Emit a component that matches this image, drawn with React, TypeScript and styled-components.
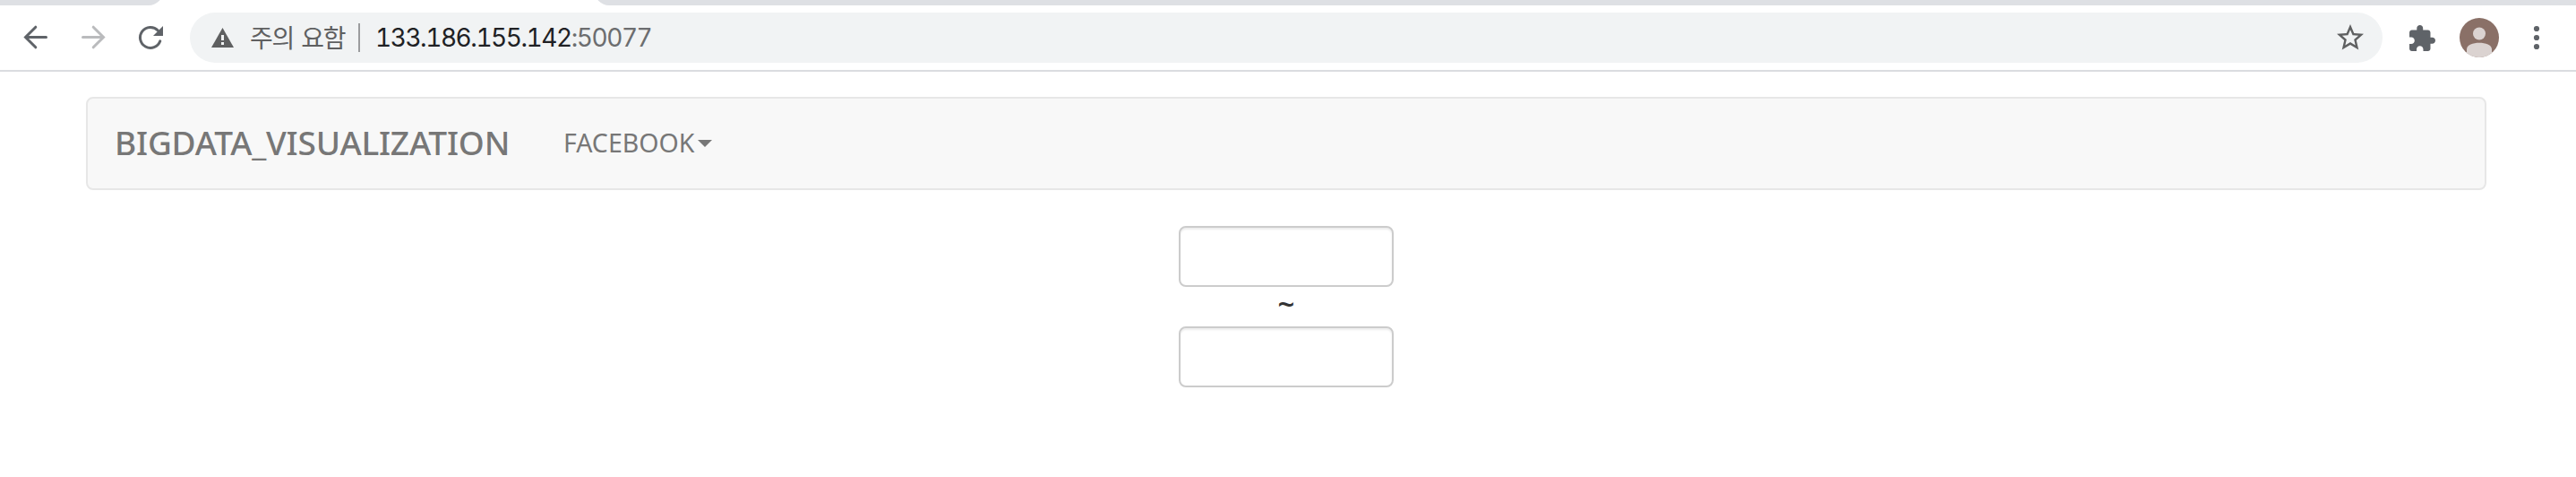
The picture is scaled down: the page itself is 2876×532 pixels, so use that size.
import React from "react";
import styled, { createGlobalStyle } from "styled-components";

const GlobalStyle = createGlobalStyle`
  *, *::before, *::after { box-sizing: border-box; }
  html, body { margin: 0; background: #fff; }
  body { height: 532px; overflow: hidden; }
`;

const Page = styled.div`
  width: 2876px;
  height: 532px;
  background: #fff;
`;

const TabStrip = styled.div`
  display: flex;
  justify-content: space-between;
  height: 6px;
  overflow: hidden;
`;

const TabEdge = styled.div<{ $side: "left" | "right" }>`
  width: ${(p) => (p.$side === "left" ? 182 : 2212)}px;
  height: 22px;
  margin-top: -16px;
  background: #dee0e4;
  border-radius: ${(p) => (p.$side === "left" ? "0 0 16px 0" : "0 0 0 16px")};
`;

const Toolbar = styled.header`
  display: flex;
  align-items: center;
  height: 74px;
  padding: 0 38px 0 24px;
  border-bottom: 2px solid #dadce0;
`;

const IconButton = styled.button<{ $size: number; $gap: number }>`
  display: flex;
  flex: none;
  width: ${(p) => p.$size}px;
  height: ${(p) => p.$size}px;
  margin: 0 ${(p) => p.$gap}px 0 0;
  padding: 0;
  border: 0;
  background: none;

  svg { display: block; width: 100%; height: 100%; }
`;

const Omnibox = styled.div`
  display: flex;
  align-items: center;
  flex: none;
  width: 2448px;
  height: 56px;
  margin-right: 30px;
  padding: 0 18px 0 24px;
  border-radius: 28px;
  background: #f1f3f4;
`;

const WarningIcon = styled.svg`
  flex: none;
  width: 25px;
  height: 22px;
`;

const SecurityLabel = styled.span`
  width: 121px;
  margin-left: 18px;
  padding-bottom: 3px;
  font: 400 28px/40px "Noto Sans CJK KR", sans-serif;
  letter-spacing: -1.2px;
  word-spacing: 3px;
  color: #5f6061;
  white-space: nowrap;
`;

const Divider = styled.span`
  width: 2px;
  height: 32px;
  background: #9b9c9e;
`;

const Address = styled.span`
  flex: 1;
  margin-left: 17px;
  font: 400 28px/40px Inter, sans-serif;
  font-variant-numeric: tabular-nums;
  letter-spacing: -1.45px;
  color: #202124;
`;

const Port = styled.span`
  color: #6c6d6f;
`;

const Container = styled.main`
  padding: 28px 100px 0 96px;
`;

const Navbar = styled.nav`
  display: flex;
  align-items: center;
  height: 104px;
  padding: 0 0 3px 30px;
  border: 2px solid #e7e7e7;
  border-radius: 8px;
  background: #f8f8f8;
  color: #777;
  font-family: "Noto Sans", sans-serif;
`;

const Brand = styled.span`
  width: 501px;
  font-size: 37px;
  font-weight: 500;
  line-height: 40px;
  letter-spacing: -0.2px;
  white-space: nowrap;
`;

const MenuToggle = styled.span`
  display: flex;
  align-items: center;
  font-size: 28.5px;
  font-weight: 450;
  line-height: 40px;
`;

const Caret = styled.span`
  margin: 3px 0 0 4px;
  border: 8px solid transparent;
  border-top-color: #777;
  border-bottom: 0;
`;

const DateRange = styled.form`
  display: flex;
  flex-direction: column;
  align-items: center;
  width: 2680px;
  padding-top: 40px;
`;

const DateInput = styled.input`
  width: 240px;
  height: 68px;
  border: 2px solid #ccc;
  border-radius: 8px;
  background: #fff;
  box-shadow: inset 0 2px 2px rgba(0, 0, 0, 0.075);
`;

const Tilde = styled.span`
  height: 44px;
  font: 600 33px/38px "Noto Sans", sans-serif;
  color: #333;
`;

export default function App() {
  return (
    <Page>
      <GlobalStyle />
      <TabStrip>
        <TabEdge $side="left" />
        <TabEdge $side="right" />
      </TabStrip>
      <Toolbar>
        <IconButton $size={32} $gap={32} aria-label="Back">
          <svg viewBox="0 0 32 32" fill="none" stroke="#5f6368" strokeWidth="3" strokeLinecap="round">
            <path d="M27.5 15.5H5M15.8 4.2L4.5 15.5L15.8 26.8" />
          </svg>
        </IconButton>
        <IconButton $size={32} $gap={32} aria-label="Forward">
          <svg viewBox="0 0 32 32" fill="none" stroke="#babbbd" strokeWidth="3" strokeLinecap="round">
            <path d="M4.5 15.5H27M16.2 4.2L27.5 15.5L16.2 26.8" />
          </svg>
        </IconButton>
        <IconButton $size={32} $gap={28} aria-label="Reload">
          <svg viewBox="0 0 32 32">
            <path d="M26.8 19.8A11.5 11.5 0 1 1 24.3 8" fill="none" stroke="#5f6368" strokeWidth="3" strokeLinecap="round" />
            <path d="M30 3V14H19Z" fill="#5f6368" />
          </svg>
        </IconButton>
        <Omnibox>
          <WarningIcon viewBox="0 0 25 22">
            <path d="M12.5 0L25 22H0Z" fill="#5f6061" />
            <path d="M11 8h3v6h-3zM11 16h3v3h-3z" fill="#f1f3f4" />
          </WarningIcon>
          <SecurityLabel>주의 요함</SecurityLabel>
          <Divider />
          <Address>133.186.155.142<Port>:50077</Port></Address>
          <IconButton $size={36} $gap={0} aria-label="Bookmark">
            <svg viewBox="0 0 24 24" fill="#5f6061">
              <path d="M22 9.24l-7.19-.62L12 2 9.19 8.63 2 9.24l5.46 4.73L5.82 21 12 17.27 18.18 21l-1.63-7.03L22 9.24zM12 15.4l-3.76 2.27 1-4.28-3.32-2.88 4.38-.38L12 6.1l1.71 4.04 4.38.38-3.32 2.88 1 4.28L12 15.4z" />
            </svg>
          </IconButton>
        </Omnibox>
        <IconButton $size={29} $gap={27} aria-label="Extensions">
          <svg viewBox="2 1 21 21" fill="#5f6368">
            <path d="M20.5 11H19V7c0-1.1-.9-2-2-2h-4V3.5C13 2.12 11.88 1 10.5 1S8 2.12 8 3.5V5H4c-1.1 0-1.99.9-1.99 2v3.8H3.5c1.49 0 2.7 1.21 2.7 2.7s-1.21 2.7-2.7 2.7H2V20c0 1.1.9 2 2 2h3.8v-1.5c0-1.49 1.21-2.7 2.7-2.7s2.7 1.21 2.7 2.7V22H17c1.1 0 2-.9 2-2v-4h1.5c1.38 0 2.5-1.12 2.5-2.5S21.88 11 20.5 11z" />
          </svg>
        </IconButton>
        <IconButton $size={44} $gap={26} aria-label="Profile">
          <svg viewBox="0 0 44 44">
            <circle cx="22" cy="22" r="22" fill="#8a7067" />
            <circle cx="22" cy="17.5" r="7" fill="#dbd3d1" />
            <path d="M8 39V35C8 30 15 27.8 22 27.8S36 30 36 35V39A22 22 0 0 1 8 39Z" fill="#dbd3d1" />
          </svg>
        </IconButton>
        <IconButton $size={32} $gap={0} aria-label="Menu">
          <svg viewBox="0 0 32 32" fill="#5f6368">
            <circle cx="16" cy="6" r="3.1" />
            <circle cx="16" cy="16" r="3.1" />
            <circle cx="16" cy="26" r="3.1" />
          </svg>
        </IconButton>
      </Toolbar>
      <Container>
        <Navbar>
          <Brand>BIGDATA_VISUALIZATION</Brand>
          <MenuToggle>FACEBOOK<Caret /></MenuToggle>
        </Navbar>
        <DateRange>
          <DateInput aria-label="Start date" />
          <Tilde>~</Tilde>
          <DateInput aria-label="End date" />
        </DateRange>
      </Container>
    </Page>
  );
}
